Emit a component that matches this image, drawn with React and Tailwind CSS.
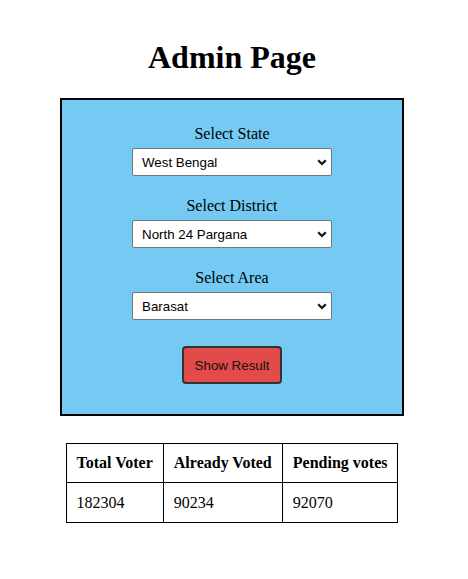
import React from "react";

const stats = [
  { label: "Total Voter", value: "182304", width: "w-[97px]" },
  { label: "Already Voted", value: "90234", width: "w-[119px]" },
  { label: "Pending votes", value: "92070", width: "w-[114px]" },
];

function Field({ label, options }) {
  return (
    <div className="flex flex-col items-center">
      <label className="text-[16px] leading-[18px] text-black">{label}</label>
      <div className="relative mt-[5px]">
        <select className="block h-[28px] w-[200px] appearance-none rounded-[2px] border border-[#767676] bg-white pt-[2px] pl-[9px] pr-[20px] font-['Liberation_Sans',Arial,sans-serif] text-[13.333px] text-black">
          {options.map((o) => (
            <option key={o}>{o}</option>
          ))}
        </select>
        {/* chevron */}
        <svg
          className="pointer-events-none absolute right-[5px] top-[11px]"
          width="10"
          height="7"
          viewBox="0 0 10 7"
        >
          <polyline points="1.2,1.2 5,5 8.8,1.2" fill="none" stroke="#111" strokeWidth="2.2" />
        </svg>
      </div>
    </div>
  );
}

export default function App() {
  return (
    <div className="w-[464px] min-h-[579px] bg-white font-['Liberation_Serif','Times_New_Roman',serif] text-black flex flex-col items-center">
      <h1 className="mt-[39px] text-[32px] leading-[37px] font-bold">Admin Page</h1>

      <div className="mt-[22px] w-[344px] border-2 border-black bg-[#74caf3] pt-[25px] pb-[30px] flex flex-col items-center gap-[21px]">
        <Field label="Select State" options={["West Bengal"]} />
        <Field label="Select District" options={["North 24 Pargana"]} />
        <Field label="Select Area" options={["Barasat"]} />
        <button className="mt-[5px] h-[38px] w-[100px] rounded-[4px] border-2 border-[#333] bg-[#e34a4a] pt-[1px] font-['Liberation_Sans',Arial,sans-serif] text-[13.333px] text-[#111]">
          Show Result
        </button>
      </div>

      <table className="mt-[27px] border-collapse border border-black text-[16px]">
        <thead>
          <tr>
            {stats.map((s) => (
              <th
                key={s.label}
                className={`${s.width} h-[39px] border border-black px-[10px] text-left font-bold whitespace-nowrap`}
              >
                {s.label}
              </th>
            ))}
          </tr>
        </thead>
        <tbody>
          <tr>
            {stats.map((s) => (
              <td key={s.label} className="h-[40px] border border-black px-[10px] text-left">
                {s.value}
              </td>
            ))}
          </tr>
        </tbody>
      </table>
    </div>
  );
}
